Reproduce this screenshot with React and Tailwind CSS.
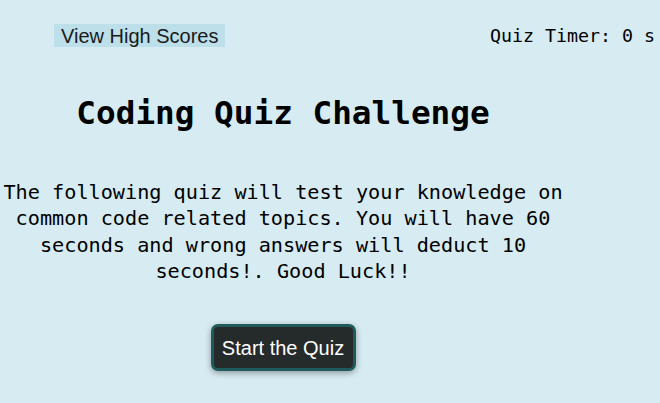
export default function App() {
  return (
    <div className="w-[660px] h-[403px] overflow-hidden bg-[#d6ebf2] text-black">
      <header className="flex justify-between items-start pt-[24px] pl-[54px] pr-[5px] h-[60px]">
        <button className="bg-[#bcdfea] px-[7px] h-[23px] flex items-center text-[20px] text-[#1a1a1a] font-['Liberation_Sans',Arial,sans-serif] leading-none">
          View High Scores
        </button>
        <div className="font-['DejaVu_Sans_Mono',monospace] text-[18.3px] leading-none pt-[3px]">
          Quiz Timer: 0 s
        </div>
      </header>

      <main className="w-[566px] flex flex-col items-center font-['DejaVu_Sans_Mono',monospace]">
        <h1 className="mt-[33px] text-[32.7px] font-bold leading-[40px]">Coding Quiz Challenge</h1>
        <p className="mt-[46px] text-[20.2px] leading-[26.3px] text-center">
          The following quiz will test your knowledge on common code related topics. You will have 60 seconds and wrong answers will deduct 10 seconds!. Good Luck!!
        </p>
        <button className="mt-[40px] bg-[#252a2b] border-[3px] border-[#1f5b5b] rounded-[7px] w-[145px] h-[47px] text-white text-[20px] font-['Liberation_Sans',Arial,sans-serif] shadow-[0_2px_6px_rgba(0,0,0,0.35)]">
          Start the Quiz
        </button>
      </main>
    </div>
  );
}
